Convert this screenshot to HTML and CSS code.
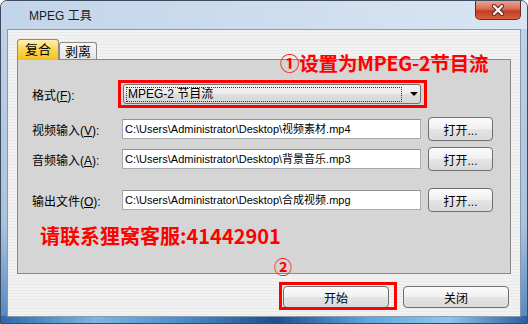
FILE: index.html
```html
<!DOCTYPE html>
<html lang="zh-CN">

<head>
    <meta charset="UTF-8">
    <title>MPEG 工具</title>
    <link rel="stylesheet" href="styles.css">
</head>

<body>
    <div class="window">
        <div class="titlebar">
            <span class="title">MPEG 工具</span>
            <span class="close">
                <svg width="16" height="12" viewBox="0 0 16 12">
                    <path d="M4 2 L12 10 M12 2 L4 10" stroke="#5a2418" stroke-width="4" stroke-linecap="round" />
                    <path d="M4 2 L12 10 M12 2 L4 10" stroke="#ffffff" stroke-width="2.2" stroke-linecap="round" />
                </svg>
            </span>
        </div>

        <div class="client">
            <div class="tabs">
                <span class="tab active">复合</span>
                <span class="tab">剥离</span>
            </div>

            <div class="panel">
                <div class="row row-format">
                    <label>格式(<u>F</u>):</label>
                    <div class="combo">
                        <span class="combo-text">MPEG-2 节目流</span>
                        <span class="arrow"></span>
                    </div>
                </div>
                <div class="row row-video">
                    <label>视频输入(<u>V</u>):</label>
                    <div class="field">C:\Users\Administrator\Desktop\视频素材.mp4</div>
                    <button class="btn">打开...</button>
                </div>
                <div class="row row-audio">
                    <label>音频输入(<u>A</u>):</label>
                    <div class="field">C:\Users\Administrator\Desktop\背景音乐.mp3</div>
                    <button class="btn">打开...</button>
                </div>
                <div class="row row-output">
                    <label>输出文件(<u>O</u>):</label>
                    <div class="field">C:\Users\Administrator\Desktop\合成视频.mpg</div>
                    <button class="btn">打开...</button>
                </div>
                <p class="promo">请联系狸窝客服:41442901</p>
            </div>

            <div class="actions">
                <button class="btn btn-wide">开始</button>
                <button class="btn btn-wide">关闭</button>
            </div>
        </div>

        <!-- annotations drawn over the dialog -->
        <span class="note note-1">①设置为MPEG-2节目流</span>
        <span class="note note-2">②</span>
        <span class="mark mark-1"></span>
        <span class="mark mark-2"></span>
    </div>
</body>

</html>
```

FILE: styles.css
```css
* {
    margin: 0;
    padding: 0;
    box-sizing: border-box;
}

body {
    width: 528px;
    height: 324px;
    overflow: hidden;
    font-family: "Liberation Sans", "Noto Sans CJK SC", sans-serif;
    font-size: 12px;
    color: #000;
    background: #fff;
}

.window {
    position: relative;
    width: 528px;
    height: 324px;
    border: 1px solid #3d4b5e;
    border-radius: 7px 7px 0 0;
    display: flex;
    flex-direction: column;
    background:
        linear-gradient(to right, #2e6aa8, #79b6e4 18%, #4a8cc8 35%, #1f4f88 52%, #5fa6dc 70%, #8cc6ee 85%, #2d5f9c) bottom / 100% 7px no-repeat,
        linear-gradient(to bottom, #c2d4e8, #a9c2dc 70%, #4f86c0);
}

.titlebar {
    height: 28px;
    display: flex;
    justify-content: space-between;
    align-items: flex-start;
    padding: 0 6px 0 28px;
    border-radius: 6px 6px 0 0;
    background: linear-gradient(to right, #c3d5ea, #cddcee 50%, #d9e5f2);
}

.title {
    margin-top: 7px;
    line-height: 16px;
    font-size: 12px;
    color: #1b1b1b;
}

.close {
    width: 46px;
    height: 19px;
    display: flex;
    align-items: center;
    justify-content: center;
    border: 1px solid #6b2a1f;
    border-top: none;
    border-radius: 0 0 5px 5px;
    background: linear-gradient(to bottom, #e9a493, #d86b54 45%, #c23b22 55%, #d8613e);
}

.client {
    flex: 1;
    margin: 0 6px 6px;
    border: 1px solid #8799ad;
    padding: 9px 9px 8px;
    display: flex;
    flex-direction: column;
    background: repeating-linear-gradient(to bottom, #f2f2f2 0, #f2f2f2 2px, #e9e9e9 2px, #e9e9e9 3px);
}

.tabs {
    height: 21px;
    display: flex;
    align-items: flex-end;
}

.tab {
    height: 18px;
    width: 38px;
    line-height: 17px;
    font-size: 13px;
    text-align: center;
    border: 1px solid #8a8a8a;
    border-bottom: none;
    border-radius: 3px 3px 0 0;
    background: linear-gradient(to bottom, #f7f7f7, #e2e2e2);
}

.tab.active {
    position: relative;
    z-index: 1;
    width: 42px;
    height: 21px;
    line-height: 20px;
    background: linear-gradient(to bottom, #fff0b0, #fbd655 45%, #f4c01c);
}

.panel {
    height: 215px;
    margin-top: -1px;
    padding: 22px 0 0 14px;
    border: 1px solid #85888f;
    background: #d5d5d5;
}

.row {
    height: 24px;
    display: grid;
    grid-template-columns: 90px 299px 72px;
    align-items: center;
}

.row .btn {
    margin-left: 7px;
}

.row-video {
    margin-top: 11px;
}

.row-audio {
    margin-top: 6px;
}

.row-output {
    margin-top: 17px;
}

label {
    white-space: nowrap;
}

.combo {
    height: 20px;
    margin-left: 1px;
    display: flex;
    align-items: center;
    padding: 0 2px;
    border: 1px solid #707070;
    border-radius: 3px;
    background: linear-gradient(to bottom, #f4f4f4, #ececec 50%, #dfdfdf 51%, #d6d6d6);
}

.combo-text {
    width: 277px;
    height: 15px;
    line-height: 13px;
    padding-left: 1px;
    border: 1px dotted #333;
}

.arrow {
    margin-left: 8px;
    width: 0;
    height: 0;
    border-left: 4px solid transparent;
    border-right: 4px solid transparent;
    border-top: 4px solid #000;
}

.field {
    height: 20px;
    line-height: 18px;
    padding-left: 2px;
    font-size: 11px;
    white-space: nowrap;
    overflow: hidden;
    border: 1px solid #a5a9b0;
    border-top-color: #8e939b;
    background: #fff;
}

.btn {
    height: 24px;
    font-family: inherit;
    font-size: 12px;
    color: #000;
    border: 1px solid #707070;
    border-radius: 4px;
    background: linear-gradient(to bottom, #fbfbfb, #f0f0f0 50%, #e4e4e4 51%, #dadada);
}

.promo {
    margin: 10px 0 0 8px;
    line-height: 28px;
    font-family: "Noto Sans CJK SC", sans-serif;
    font-size: 20px;
    font-weight: bold;
    color: #ff0000;
}

.actions {
    margin-top: 12px;
    padding-right: 2px;
    display: flex;
    justify-content: flex-end;
    gap: 14px;
}

.btn-wide {
    width: 106px;
    height: 22px;
}

.note {
    position: absolute;
    z-index: 3;
    font-family: "Noto Sans CJK SC", sans-serif;
    font-weight: bold;
    color: #ff0000;
    white-space: nowrap;
}

.note-1 {
    left: 279px;
    top: 48px;
    font-size: 19.5px;
    line-height: 28px;
    letter-spacing: -0.2px;
}

.note-2 {
    left: 273px;
    top: 253px;
    font-size: 18px;
    line-height: 24px;
}

.mark {
    position: absolute;
    z-index: 2;
    border: 3px solid #ff0000;
}

.mark-1 {
    left: 117px;
    top: 79px;
    width: 309px;
    height: 28px;
}

.mark-2 {
    left: 278px;
    top: 281px;
    width: 118px;
    height: 28px;
}
```
